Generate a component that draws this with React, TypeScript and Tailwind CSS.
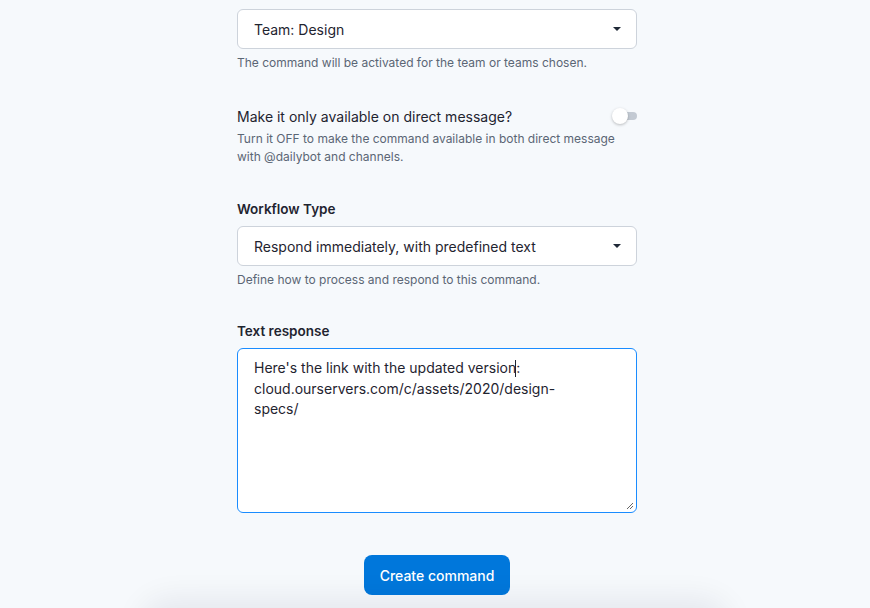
import React from "react";

const Caret = () => (
  <svg width="8" height="4" viewBox="0 0 8 4" className="shrink-0">
    <path d="M0 0h8L4 4z" fill="#1f2937" />
  </svg>
);

const Select = ({ value }: { value: string }) => (
  <div className="h-10 w-full rounded-md border border-[#cdd3db] bg-white pl-4 pr-[15px] flex items-center justify-between">
    <span className="text-[14px] text-[#1f2430]">{value}</span>
    <Caret />
  </div>
);

const Help = ({ children }: { children: React.ReactNode }) => (
  <p className="mt-[5px] text-[12px] leading-[18px] text-[#5b6675]">{children}</p>
);

export default function App() {
  return (
    <div
      className="relative h-[608px] w-[870px] overflow-hidden bg-[#f6f9fc]"
      style={{ fontFamily: "Inter, 'Noto Sans', sans-serif" }}
    >
      <div className="ml-[237px] w-[400px] pt-[9px]">
        {/* Team */}
        <Select value="Team: Design" />
        <Help>The command will be activated for the team or teams chosen.</Help>

        {/* Direct message toggle */}
        <div className="mt-[34px] flex h-5 items-center justify-between">
          <span className="text-[14px] text-[#1f2430]">Make it only available on direct message?</span>
          <div className="relative h-[8px] w-[21px] rounded-full bg-[#c3cad3]">
            <div className="absolute -left-[4px] -top-[4px] h-4 w-4 rounded-full bg-white shadow-[0_1px_3px_rgba(0,0,0,0.25)]" />
          </div>
        </div>
        <p className="mt-[4px] text-[12px] leading-[18px] text-[#5b6675]">
          Turn it OFF to make the command available in both direct message
          <br />
          with @dailybot and channels.
        </p>

        {/* Workflow */}
        <div className="mt-[33px] text-[13.5px] leading-5 font-semibold text-[#1f2430]">Workflow Type</div>
        <div className="mt-[7px]">
          <Select value="Respond immediately, with predefined text" />
        </div>
        <Help>Define how to process and respond to this command.</Help>

        {/* Text response */}
        <div className="mt-[32px] text-[13.5px] leading-5 font-semibold text-[#1f2430]">Text response</div>
        <div className="relative mt-[7px] h-[165px] w-full rounded-md border border-[#1a8cff] bg-white px-4 pt-[9px]">
          <p className="text-[14px] leading-[20.5px] text-[#1f2430]">
            Here's the link with the updated version
            <span className="relative">
              <span className="absolute -left-[1px] top-[1px] h-[17px] w-px bg-[#1f2430]" />:
            </span>
            <br />
            cloud.ourservers.com/c/assets/2020/design-
            <br />
            specs/
          </p>
          <svg width="8" height="8" viewBox="0 0 8 8" className="absolute bottom-[2px] right-[2px]">
            <path d="M7 1L1 7M7 4L4 7" stroke="#666" strokeWidth="1" />
          </svg>
        </div>

        <div className="mt-[42px] ml-[127px]">
          <button className="h-10 w-[146px] rounded-lg bg-[#0077db] text-[14px] font-medium text-white">
            Create command
          </button>
        </div>
      </div>
      <div className="absolute bottom-[-40px] left-[150px] h-[40px] w-[570px] rounded-full shadow-[0_0_30px_10px_rgba(0,20,60,0.07)]" />
    </div>
  );
}
